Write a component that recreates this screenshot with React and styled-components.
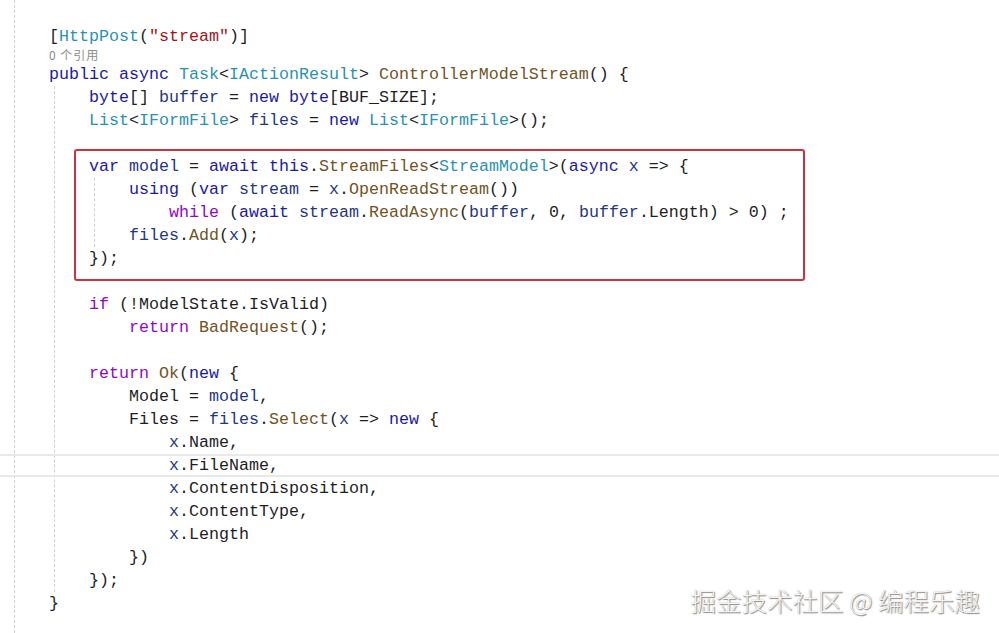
import React from "react";
import styled, { createGlobalStyle } from "styled-components";

const GlobalStyle = createGlobalStyle`
  html, body {
    margin: 0;
    padding: 0;
    background: #ffffff;
  }
  body {
    width: 999px;
    height: 633px;
    overflow: hidden;
  }
`;

const colors = {
  k: "#1a1aa6",
  c: "#8f08c4",
  t: "#2b91af",
  m: "#74531f",
  v: "#1f377f",
  s: "#a31515",
  p: "#1e1e1e",
};

const Page = styled.div`
  position: relative;
  width: 999px;
  height: 633px;
  overflow: hidden;
  background: #ffffff;
`;

const Editor = styled.div`
  margin-left: 14px;
  height: 100%;
  box-sizing: border-box;
  border-left: 1px dashed #d0d0d0;
  padding: 25px 0 0 34px;
  font-family: "Liberation Mono", "Noto Sans CJK SC", monospace;
  font-size: 16.67px;
  color: #1e1e1e;
`;

const Line = styled.div`
  position: relative;
  height: 23px;
  line-height: 23px;
  white-space: pre;
  padding-left: ${(p) => (p.$indent || 0) * 40}px;

  ${(p) =>
    p.$current &&
    `
    &::before {
      content: "";
      position: absolute;
      left: -200px;
      width: 1400px;
      top: 0;
      bottom: 0;
      border-top: 2px solid #e9e9e9;
      border-bottom: 2px solid #e9e9e9;
      pointer-events: none;
    }
  `}
`;

const CodeLens = styled.div`
  height: 15px;
  box-sizing: border-box;
  line-height: 13px;
  padding-bottom: 2px;
  font-family: "Noto Sans CJK SC", sans-serif;
  font-size: 12px;
  letter-spacing: 1px;
  color: #8c8c8c;
  white-space: pre;
`;

const Block = styled.div`
  margin-left: 5px;
  border-left: 1px dashed #d0d0d0;
  padding-left: 34px;
`;

const Highlight = styled.div`
  width: 731px;
  box-sizing: border-box;
  margin: -6px 0 -11px -15px;
  padding: 4px 0 9px 13px;
  border: 2px solid #cc3340;
  border-radius: 3px;
`;

const Tok = styled.span`
  color: ${(p) => colors[p.$k] || colors.p};
`;

const Watermark = styled.div`
  position: absolute;
  right: 19px;
  bottom: 15px;
  font-family: "Noto Sans CJK SC", sans-serif;
  font-size: 25.5px;
  font-weight: 300;
  color: #f4f4f4;
  text-shadow: 1px 1px 1px rgba(0, 0, 0, 0.45), 0 0 1px rgba(0, 0, 0, 0.3);
  white-space: pre;
`;

const L = ({ indent, current, children }) => (
  <Line $indent={indent} $current={current}>
    {children.length ? children : "\u00a0"}
  </Line>
);

const t = (k, text) => ({ k, text });
const render = (toks) => toks.map((x, i) => <Tok key={i} $k={x.k}>{x.text}</Tok>);

const App = () => (
  <Page>
    <GlobalStyle />
    <Editor>
      <L>{render([t("p", "["), t("t", "HttpPost"), t("p", "("), t("s", "\"stream\""), t("p", ")]")])}</L>
      <CodeLens>0 个引用</CodeLens>
      <L>
        {render([
          t("k", "public"), t("p", " "), t("k", "async"), t("p", " "), t("t", "Task"), t("p", "<"),
          t("t", "IActionResult"), t("p", "> "), t("m", "ControllerModelStream"), t("p", "() {"),
        ])}
      </L>
      <Block>
        <L>
          {render([
            t("k", "byte"), t("p", "[] "), t("v", "buffer"), t("p", " = "), t("k", "new"), t("p", " "),
            t("k", "byte"), t("p", "[BUF_SIZE];"),
          ])}
        </L>
        <L>
          {render([
            t("t", "List"), t("p", "<"), t("t", "IFormFile"), t("p", "> "), t("v", "files"), t("p", " = "),
            t("k", "new"), t("p", " "), t("t", "List"), t("p", "<"), t("t", "IFormFile"), t("p", ">();"),
          ])}
        </L>
        <L>{[]}</L>
        <Highlight>
          <L>
            {render([
              t("k", "var"), t("p", " "), t("v", "model"), t("p", " = "), t("k", "await"), t("p", " "),
              t("k", "this"), t("p", "."), t("m", "StreamFiles"), t("p", "<"), t("t", "StreamModel"),
              t("p", ">("), t("k", "async"), t("p", " "), t("v", "x"), t("p", " => {"),
            ])}
          </L>
          <Block>
            <L>
              {render([
                t("k", "using"), t("p", " ("), t("k", "var"), t("p", " "), t("v", "stream"), t("p", " = "),
                t("v", "x"), t("p", "."), t("m", "OpenReadStream"), t("p", "())"),
              ])}
            </L>
            <L indent={1}>
              {render([
                t("c", "while"), t("p", " ("), t("k", "await"), t("p", " "), t("v", "stream"), t("p", "."),
                t("m", "ReadAsync"), t("p", "("), t("v", "buffer"), t("p", ", 0, "), t("v", "buffer"),
                t("p", ".Length) > 0) ;"),
              ])}
            </L>
            <L>{render([t("v", "files"), t("p", "."), t("m", "Add"), t("p", "("), t("v", "x"), t("p", ");")])}</L>
          </Block>
          <L>{render([t("p", "});")])}</L>
        </Highlight>
        <L>{[]}</L>
        <L>{render([t("c", "if"), t("p", " (!ModelState.IsValid)")])}</L>
        <L indent={1}>{render([t("c", "return"), t("p", " "), t("m", "BadRequest"), t("p", "();")])}</L>
        <L>{[]}</L>
        <L>{render([t("c", "return"), t("p", " "), t("m", "Ok"), t("p", "("), t("k", "new"), t("p", " {")])}</L>
        <L indent={1}>{render([t("p", "Model = "), t("v", "model"), t("p", ",")])}</L>
        <L indent={1}>
          {render([
            t("p", "Files = "), t("v", "files"), t("p", "."), t("m", "Select"), t("p", "("), t("v", "x"),
            t("p", " => "), t("k", "new"), t("p", " {"),
          ])}
        </L>
        <L indent={2}>{render([t("v", "x"), t("p", ".Name,")])}</L>
        <L indent={2} current>{render([t("v", "x"), t("p", ".FileName,")])}</L>
        <L indent={2}>{render([t("v", "x"), t("p", ".ContentDisposition,")])}</L>
        <L indent={2}>{render([t("v", "x"), t("p", ".ContentType,")])}</L>
        <L indent={2}>{render([t("v", "x"), t("p", ".Length")])}</L>
        <L indent={1}>{render([t("p", "})")])}</L>
        <L>{render([t("p", "});")])}</L>
      </Block>
      <L>{render([t("p", "}")])}</L>
    </Editor>
    <Watermark>掘金技术社区 @ 编程乐趣</Watermark>
  </Page>
);

export default App;
